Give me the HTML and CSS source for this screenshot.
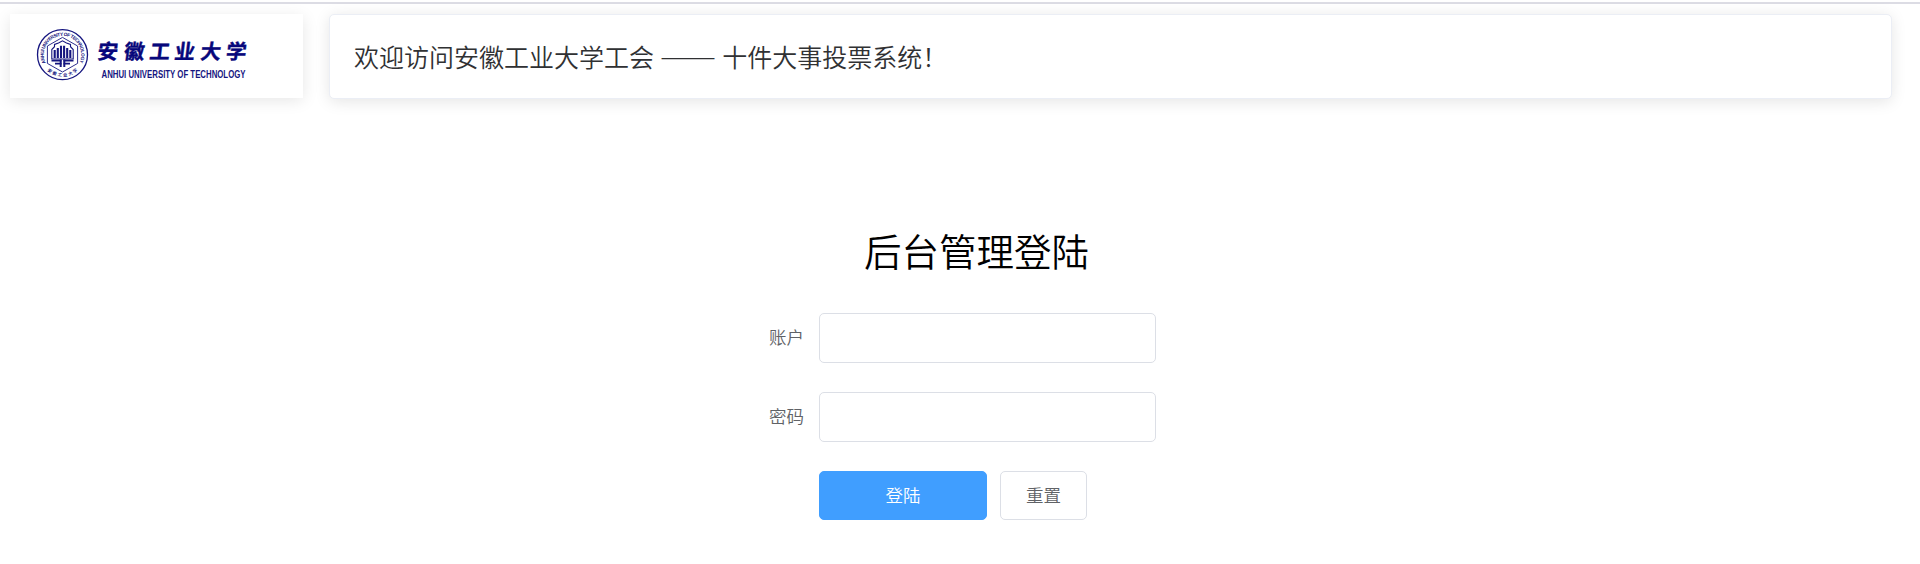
FILE: index.html
```html
<!DOCTYPE html>
<html lang="zh-CN">
<head>
<meta charset="utf-8">
<title>后台管理登陆</title>
<link rel="stylesheet" href="styles.css">
</head>
<body>
<header class="header">
  <div class="logo-card">
    <svg class="logo" width="293" height="84" viewBox="10 14 293 84" role="img">
      <defs>
        <path id="ring-top" d="M45.7 62.8A18.7 18.7 0 1 1 79.3 62.8"/>
        <path id="ring-bottom" d="M45.3 68.5A22.3 22.3 0 0 0 79.7 68.5"/>
      </defs>
      <g fill="none" stroke="#15157f">
        <circle cx="62.5" cy="54.7" r="25" stroke-width="1.3"/>
        <path stroke-width=".9" d="M62.5 37.4L77.6 46V63.4L62.5 72L47.4 63.4V46Z"/>
        <path stroke-width="1.1" d="M51.8 59V49.5L54.5 46.7V44.5L58.5 43L62.5 40.8L66.5 43L70.5 44.5V46.7L73.2 49.5V59Z"/>
        <path stroke-width="2.1" d="M54.7 58V50M57.8 58V48M61 58V45.7M64.1 58V45.7M67.2 58V48M70.3 58V50"/>
        <path stroke-width="1.7" d="M51.5 60.7H61.5M63.5 60.7H73.5M55 63.6H61.5M63.5 63.6H70"/>
        <path stroke-width="2" d="M60.7 59.5V67M64.3 59.5V67"/>
      </g>
      <text class="ring-text"><textPath href="#ring-top" textLength="75">ANHUI UNIVERSITY OF TECHNOLOGY</textPath></text>
      <text class="ring-text ring-cjk"><textPath href="#ring-bottom" startOffset="3" textLength="33">安徽工业大学</textPath></text>
      <g class="logo-name" transform="translate(-1 58.5) skewX(-7)">
        <text x="108" y=".5">安</text><text x="134.5">徽</text><text x="160">工</text><text x="185">业</text><text x="211" y=".5">大</text><text x="236.5">学</text>
      </g>
      <text class="logo-en" x="101.5" y="78" textLength="144" lengthAdjust="spacingAndGlyphs">ANHUI UNIVERSITY OF TECHNOLOGY</text>
    </svg>
  </div>
  <div class="welcome-card">欢迎访问安徽工业大学工会 <span class="dash">——</span> 十件大事投票系统！</div>
</header>
<main class="login">
  <h1 class="title">后台管理登陆</h1>
  <form class="form">
    <div class="row"><label class="label" for="account">账户</label><input class="input" id="account" type="text"></div>
    <div class="row"><label class="label" for="password">密码</label><input class="input" id="password" type="password"></div>
    <div class="actions"><button class="button primary" type="button">登陆</button><button class="button" type="button">重置</button></div>
  </form>
</main>
</body>
</html>
```
FILE: styles.css
```css
* { box-sizing: border-box; }
body {
  margin: 0;
  padding-top: 2px;
  height: 564px;
  overflow: hidden;
  background: #fff;
  font-family: "Noto Sans CJK SC", sans-serif;
  font-weight: 350;
}
.header {
  display: flex;
  gap: 26px;
  padding: 10px 28px 0 10px;
  border-top: 2px solid #dcdce4;
}
.logo-card {
  width: 293px;
  height: 84px;
  background: #fff;
  box-shadow: 0 2.5px 15px rgba(0, 0, 0, .1);
}
.logo { display: block; }
.ring-text { font: 700 4.8px "Liberation Sans Narrow", "Liberation Sans", sans-serif; fill: #15157f; }
.ring-cjk { font: 700 4.3px "Noto Sans CJK SC", sans-serif; }
.logo-name { font: 700 20.5px "Noto Sans CJK SC", sans-serif; fill: #07077b; stroke: #07077b; stroke-width: .4; stroke-linejoin: round; text-anchor: middle; }
.logo-en { font: 700 11px "Liberation Sans Narrow", "Liberation Sans", sans-serif; fill: #15157f; }
.welcome-card {
  flex: 1;
  height: 85px;
  padding-left: 24px;
  border: 1px solid #ebeef5;
  border-radius: 5px;
  background: #fff;
  box-shadow: 0 2.5px 15px rgba(0, 0, 0, .1);
  color: #303133;
  font-size: 25px;
  line-height: 82px;
  white-space: nowrap;
}
.dash { font-size: 28.5px; line-height: 1; vertical-align: -3px; }
.login { width: 393px; margin: 124px 0 0 763px; }
.title {
  margin: 0;
  padding-left: 34px;
  font-size: 37.5px;
  font-weight: 350;
  line-height: 54px;
  text-align: center;
  color: #000;
  height: 90px;
}
.form { display: flex; flex-direction: column; gap: 29px; }
.row { display: flex; }
.label {
  width: 56px;
  padding-right: 15px;
  text-align: right;
  font-size: 17.5px;
  line-height: 48px;
  color: #606266;
}
.input {
  width: 337px;
  height: 50px;
  padding: 0 18px;
  border: 1px solid #dcdfe6;
  border-radius: 5px;
  background: #fff;
  outline: none;
}
.actions { display: flex; gap: 13px; padding-left: 56px; }
.button {
  width: 87px;
  height: 49px;
  padding: 0 0 3px;
  border: 1px solid #dcdfe6;
  border-radius: 5px;
  background: #fff;
  color: #606266;
  font: inherit;
  font-size: 17.5px;
}
.primary { width: 168px; border-color: #409eff; background: #409eff; color: #fff; }
```
